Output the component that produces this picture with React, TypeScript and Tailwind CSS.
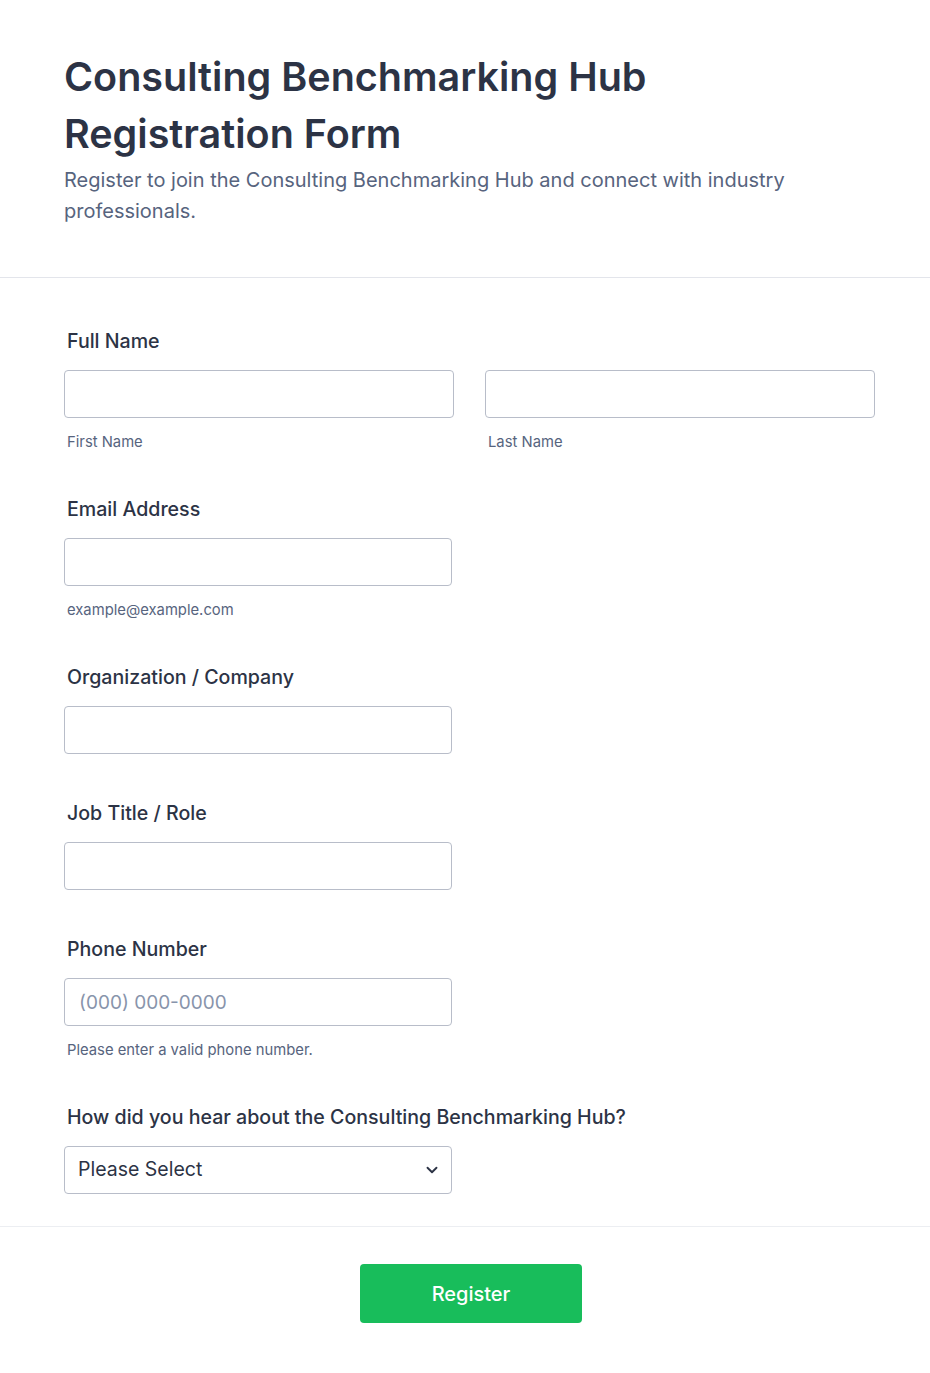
import { ChevronDown } from "lucide-react";

const font = { fontFamily: "Inter, 'Noto Sans', sans-serif" };

function Label({ children }: { children: React.ReactNode }) {
  return (
    <div className="mb-[15px] pl-[3px] text-[19.6px] leading-[28px] font-medium text-[#2c3345]">
      {children}
    </div>
  );
}

function Sub({ children }: { children: React.ReactNode }) {
  return (
    <div className="mt-[14px] pl-[3px] text-[14.8px] leading-[20px] text-[#57647e]">
      {children}
    </div>
  );
}

function Field({ placeholder }: { placeholder?: string }) {
  return (
    <input
      placeholder={placeholder}
      className="block h-12 w-full rounded border border-[#b8bdc9] bg-white px-[14px] text-[19px] text-[#2c3345] outline-none placeholder:text-[#8894ab]"
    />
  );
}

export default function App() {
  return (
    <div className="min-h-[1373px] bg-white" style={font}>
      <header className="px-16 pt-[49px] pb-[50px]">
        <h1 className="text-[39.5px] leading-[57px] font-semibold text-[#2c3345]">
          Consulting Benchmarking Hub
          <br />
          Registration Form
        </h1>
        <p className="mt-[2px] max-w-[800px] text-[20px] leading-[31px] text-[#57647e]">
          Register to join the Consulting Benchmarking Hub and connect with industry
          professionals.
        </p>
      </header>
      <div className="h-px bg-[#e3e5eb]" />

      <form className="flex flex-col gap-[43px] px-16 pt-[49px] pb-[32px]">
        <div>
          <Label>Full Name</Label>
          <div className="grid w-[811px] grid-cols-2 gap-[31px]">
            <div>
              <Field />
              <Sub>First Name</Sub>
            </div>
            <div>
              <Field />
              <Sub>Last Name</Sub>
            </div>
          </div>
        </div>

        <div className="w-[388px]">
          <Label>Email Address</Label>
          <Field />
          <Sub>example@example.com</Sub>
        </div>

        <div className="w-[388px]">
          <Label>Organization / Company</Label>
          <Field />
        </div>

        <div className="mt-[2px] w-[388px]">
          <Label>Job Title / Role</Label>
          <Field />
        </div>

        <div className="mt-[2px] w-[388px]">
          <Label>Phone Number</Label>
          <Field placeholder="(000) 000-0000" />
          <Sub>Please enter a valid phone number.</Sub>
        </div>

        <div>
          <Label>How did you hear about the Consulting Benchmarking Hub?</Label>
          <div className="flex h-12 w-[388px] items-center justify-between rounded border border-[#b8bdc9] bg-white pr-[10px] pl-[13px] text-[19.5px] text-[#2c3345]">
            <span>Please Select</span>
            <ChevronDown size={18} strokeWidth={2.5} className="text-[#2c3345]" />
          </div>
        </div>
      </form>

      <div className="h-px bg-[#eceef2]" />
      <div className="flex justify-center pt-[37px] pb-[50px] pl-3">
        <button className="h-[59px] w-[222px] rounded bg-[#18bd5b] text-[20px] font-medium text-white">
          Register
        </button>
      </div>
    </div>
  );
}
